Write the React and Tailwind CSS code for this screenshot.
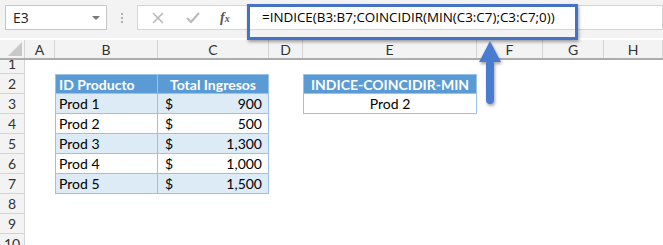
import React from 'react'

const cols = [
    { k: 'A', w: 'w-[30px]' },
    { k: 'B', w: 'w-[103px]' },
    { k: 'C', w: 'w-[111px]' },
    { k: 'D', w: 'w-[34px]' },
    { k: 'E', w: 'w-[174px]' },
    { k: 'F', w: 'w-[66px]' },
    { k: 'G', w: 'w-[61px]' },
    { k: 'H', w: 'flex-1' },
]

const products = [
    { id: 'Prod 1', total: '900' },
    { id: 'Prod 2', total: '500' },
    { id: 'Prod 3', total: '1,300' },
    { id: 'Prod 4', total: '1,000' },
    { id: 'Prod 5', total: '1,500' },
]

const rows = [1, 2, 3, 4, 5, 6, 7, 8, 9, 10]

const cellFont = { fontFamily: 'Lato, "Open Sans", sans-serif' }

const Cell = ({ row, col }) => {
    const tb = 'border-[#9bc2e6] border-r border-b'
    // table 1: B2:C7
    if ((col === 'B' || col === 'C') && row >= 2 && row <= 7) {
        const first = col === 'B' ? 'border-l' : ''
        if (row === 2) {
            return (
                <div className={`h-full bg-[#5b9bd5] text-white font-bold text-[14px] flex items-center border-t ${tb} ${first} ${col === 'B' ? 'pl-[3px]' : 'justify-center'}`}>
                    {col === 'B' ? 'ID Producto' : 'Total Ingresos'}
                </div>
            )
        }
        const p = products[row - 3]
        const bg = row % 2 === 1 ? 'bg-[#ddebf7]' : 'bg-white'
        if (col === 'B') {
            return <div className={`h-full ${bg} ${tb} ${first} flex items-center pl-[3px] text-[14px] text-black`}>{p.id}</div>
        }
        return (
            <div className={`h-full ${bg} ${tb} flex items-center justify-between pl-[7px] pr-[6px] text-[14px] text-black`}>
                <span>$</span>
                <span>{p.total}</span>
            </div>
        )
    }
    // table 2: E2:E3
    if (col === 'E' && (row === 2 || row === 3)) {
        if (row === 2) {
            return (
                <div className={`h-full bg-[#5b9bd5] text-white font-bold text-[14px] flex items-center justify-center border-t border-l ${tb}`}>
                    INDICE-COINCIDIR-MIN
                </div>
            )
        }
        return <div className={`h-full bg-white border-l ${tb} flex items-center justify-center text-[14px] text-black`}>Prod 2</div>
    }
    return <div className="h-full" />
}

export default function App() {
    return (
        <div className="relative w-[663px] h-[245px] overflow-hidden bg-white">
            {/* formula bar */}
            <div className="h-[38px] bg-[#f3f3f3] flex items-start pt-[5px] pl-[5px]" style={{ fontFamily: '"Open Sans", sans-serif' }}>
                <div className="w-[102px] h-[25px] bg-white border border-[#c6c6c6] flex items-center justify-between pl-[7px] pr-[6px] text-[14px] text-[#222]">
                    <span>E3</span>
                    <span className="w-0 h-0 border-l-[4px] border-r-[4px] border-t-[4px] border-l-transparent border-r-transparent border-t-[#777]"></span>
                </div>
                <div className="w-[30px] h-[25px] flex flex-col items-center justify-center gap-[2px]">
                    <span className="w-[2px] h-[2px] bg-[#b0b0b0]"></span>
                    <span className="w-[2px] h-[2px] bg-[#b0b0b0]"></span>
                    <span className="w-[2px] h-[2px] bg-[#b0b0b0]"></span>
                </div>
                <div className="flex-1 h-[25px] bg-white border border-[#d4d4d4] flex items-center">
                    <div className="w-[110px] h-full flex items-center border-r border-[#d4d4d4]">
                        <svg width="12" height="12" viewBox="0 0 12 12" className="ml-[14px]">
                            <path d="M1 1 L11 11 M11 1 L1 11" stroke="#b8b8b8" strokeWidth="1.6" />
                        </svg>
                        <svg width="14" height="12" viewBox="0 0 14 12" className="ml-[22px]">
                            <path d="M1 6 L5 10 L13 1" stroke="#b8b8b8" strokeWidth="2" fill="none" />
                        </svg>
                        <span className="ml-[20px] text-[14px] italic font-bold text-[#555]" style={{ fontFamily: '"Liberation Serif", serif' }}>
                            f<span className="text-[10px]">x</span>
                        </span>
                    </div>
                    <div className="pl-[14px] text-[13.4px] text-black whitespace-nowrap" style={{ fontFamily: '"Open Sans", sans-serif' }}>
                        =INDICE(B3:B7;COINCIDIR(MIN(C3:C7);C3:C7;0))
                    </div>
                </div>
            </div>

            {/* column headers */}
            <div className="mt-[2px] h-[20px] flex bg-[#f3f3f3] border-b-2 border-[#ababab] text-[14px] text-[#333]" style={cellFont}>
                <div className="w-[25px] h-full border-r border-[#d4d4d4] relative">
                    <svg width="14" height="14" viewBox="0 0 14 14" className="absolute right-[2px] bottom-[2px]">
                        <polygon points="14,0 14,14 0,14" fill="#c8c8c8" />
                    </svg>
                </div>
                {cols.map((c) => (
                    <div key={c.k} className={`${c.w} h-full border-r border-[#d4d4d4] flex items-center justify-center`}>{c.k}</div>
                ))}
            </div>

            {/* grid */}
            <div style={cellFont}>
                {rows.map((r) => (
                    <div key={r} className={`flex ${r === 1 ? 'h-[14px]' : 'h-[20px]'}`}>
                        <div className="w-[25px] h-full bg-[#f3f3f3] border-r border-b border-[#d4d4d4] flex items-end justify-center text-[14px] text-[#333] leading-[19px] overflow-hidden">
                            {r}
                        </div>
                        {cols.map((c) => (
                            <div key={c.k} className={`${c.w} h-full`}>
                                <Cell row={r} col={c.k} />
                            </div>
                        ))}
                    </div>
                ))}
            </div>

            {/* highlight box around formula */}
            <div className="absolute left-[247px] top-[4px] w-[331px] h-[36px] border-[3px] border-[#4472c4] shadow-[1px_2px_3px_rgba(0,0,0,0.35)]"></div>

            {/* arrow */}
            <svg className="absolute left-[476px] top-[38px]" width="30" height="72" viewBox="0 0 30 72">
                <defs>
                    <filter id="sh" x="-50%" y="-20%" width="200%" height="150%">
                        <feDropShadow dx="1" dy="2" stdDeviation="1.5" floodColor="#000" floodOpacity="0.35" />
                    </filter>
                </defs>
                <g filter="url(#sh)">
                    <polygon points="14,3 25,24 3,24" fill="#4a7bd0" />
                    <rect x="10" y="22" width="8" height="44" rx="4" fill="#4a7bd0" />
                </g>
            </svg>
        </div>
    )
}
